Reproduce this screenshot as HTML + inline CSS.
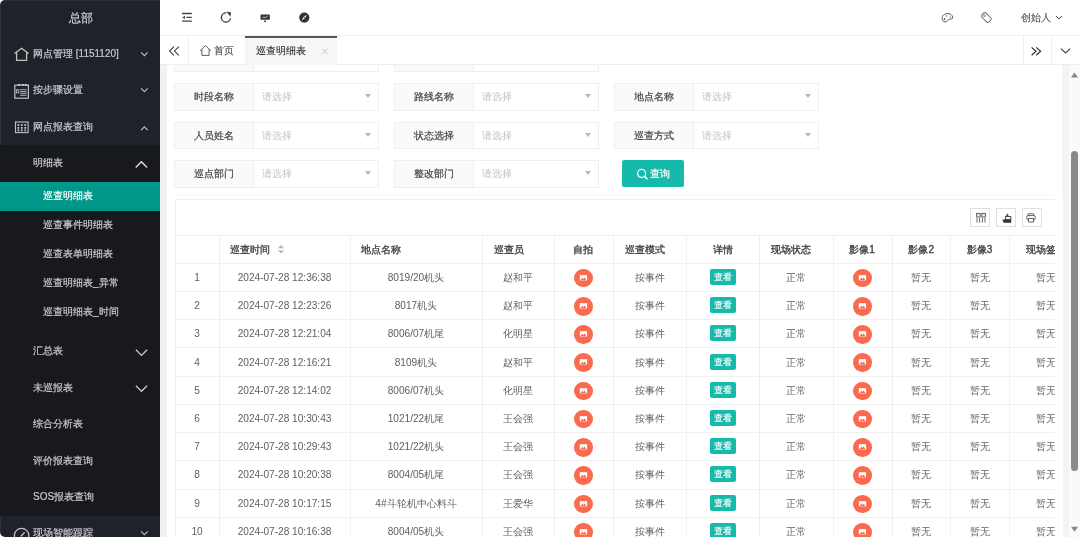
<!DOCTYPE html><html><head><meta charset="utf-8"><style>
*{margin:0;padding:0;box-sizing:border-box;}
html,body{width:1080px;height:537px;overflow:hidden;background:#fff;font-family:"Liberation Sans",sans-serif;position:relative;}
.a{position:absolute;white-space:nowrap;}
.side{position:absolute;left:0;top:0;width:160px;height:537px;background:#20222a;overflow:hidden;border-radius:5px 0 0 5px;box-shadow:inset 1px 1px 0 rgba(255,255,255,.06);}
.side .t{position:absolute;white-space:nowrap;color:#c8c9cc;-webkit-text-stroke:0.2px #c8c9cc;font-size:10px;line-height:14px;}
.sub{position:absolute;left:0;top:145px;width:160px;height:371px;background:#18191e;}
.sel{position:absolute;left:0;top:182px;width:160px;height:29px;background:#009688;}
.hdr{position:absolute;left:160px;top:0;width:920px;height:36px;background:#fff;border-bottom:1px solid #f2f2f2;}
.tabs{position:absolute;left:160px;top:36px;width:920px;height:29px;background:#fff;border-bottom:1px solid #ededed;}
.content{position:absolute;left:160px;top:65px;width:920px;height:472px;background:#f2f2f2;overflow:hidden;}
.card{position:absolute;background:#fff;}
.fi{position:absolute;height:27.5px;overflow:hidden;border:1px solid #efefef;background:#fff;}
.fi .lb{position:absolute;left:0;top:0;width:79px;height:100%;background:#fafafa;border-right:1px solid #efefef;font-size:10px;color:#444;-webkit-text-stroke:0.2px #444;text-align:center;line-height:26.5px;}
.fi .ph{position:absolute;left:87px;top:0;height:25px;line-height:26.5px;font-size:10px;color:#c2c2c2;}
.fi .car{position:absolute;right:7.5px;top:10.3px;width:0;height:0;border-left:3.6px solid transparent;border-right:3.6px solid transparent;border-top:4.3px solid #b8b8b8;}
.hl{position:absolute;height:1px;background:#f0f0f0;}
.vl{position:absolute;width:1px;background:#f0f0f0;}
.c{position:absolute;text-align:center;white-space:nowrap;font-size:10.1px;color:#5f5f5f;line-height:14px;}
.th{color:#444;-webkit-text-stroke:0.35px #444;}
.pic{position:absolute;width:18.5px;height:18.5px;border-radius:50%;background:#f96a4f;}
.side .t,.c,.fi .lb,.fi .ph,.see,.a{will-change:transform;}
.see{position:absolute;width:26px;height:16.4px;line-height:16px;background:#16baaa;color:#fff;font-size:9px;-webkit-text-stroke:0.1px #fff;border-radius:2px;text-align:center;}
</style></head><body>
<div class="side">
<div class="t" style="left:69px;top:11px;font-size:11.5px;color:rgba(255,255,255,.8)">总部</div>
<div class="sub"></div><div class="sel"></div>
<div class="t" style="left:33px;top:47.3px">网点管理 [1151120]</div>
<div class="t" style="left:33px;top:83.3px">按步骤设置</div>
<div class="t" style="left:33px;top:119.8px">网点报表查询</div>
<div class="t" style="left:33px;top:156.3px">明细表</div>
<div class="t" style="left:43px;top:189.0px;color:#fff;-webkit-text-stroke:0.2px #fff">巡查明细表</div>
<div class="t" style="left:43px;top:218.0px">巡查事件明细表</div>
<div class="t" style="left:43px;top:247.0px">巡查表单明细表</div>
<div class="t" style="left:43px;top:276.0px">巡查明细表_异常</div>
<div class="t" style="left:43px;top:305.0px">巡查明细表_时间</div>
<div class="t" style="left:33px;top:344.0px">汇总表</div>
<div class="t" style="left:33px;top:381.0px">未巡报表</div>
<div class="t" style="left:33px;top:417.0px">综合分析表</div>
<div class="t" style="left:33px;top:453.8px">评价报表查询</div>
<div class="t" style="left:33px;top:489.9px">SOS报表查询</div>
<div class="t" style="left:33px;top:526.0px">现场智能跟踪</div>
<svg class="a" style="left:0;top:0" width="160" height="537">
<path d="M141.10 52.35 L144.40 55.65 L147.70 52.35" fill="none" stroke="rgba(255,255,255,.7)" stroke-width="1.1"/>
<path d="M141.10 88.35 L144.40 91.65 L147.70 88.35" fill="none" stroke="rgba(255,255,255,.7)" stroke-width="1.1"/>
<path d="M141.10 130.05 L144.40 126.75 L147.70 130.05" fill="none" stroke="rgba(255,255,255,.7)" stroke-width="1.1"/>
<path d="M135.70 167.55 L141.40 161.85 L147.10 167.55" fill="none" stroke="rgba(255,255,255,.85)" stroke-width="1.4"/>
<path d="M135.90 349.80 L141.50 355.40 L147.10 349.80" fill="none" stroke="rgba(255,255,255,.78)" stroke-width="1.25"/>
<path d="M135.90 385.70 L141.50 391.30 L147.10 385.70" fill="none" stroke="rgba(255,255,255,.78)" stroke-width="1.25"/>
<path d="M141.10 531.35 L144.40 534.65 L147.70 531.35" fill="none" stroke="rgba(255,255,255,.7)" stroke-width="1.1"/>
<path d="M14.5 53.6 L21.6 48.2 L28.6 53.6 M16.6 52.4 V60.4 H26.6 V52.4" fill="none" stroke="rgba(255,255,255,.72)" stroke-width="1.3"/>
<rect x="14.8" y="85.2" width="13.6" height="13" fill="none" stroke="rgba(255,255,255,.72)" stroke-width="1.2"/>
<path d="M18 84.6 h2.5 M21.8 84.6 h2.5 M25 84.6 h2" stroke="rgba(255,255,255,.72)" stroke-width="1.4"/>
<path d="M20.2 89.7 h6.5 M20.2 91.6 h6.5 M20.2 93.3 h6.5 M20.2 95.3 h6.5" stroke="rgba(255,255,255,.72)" stroke-width="0.9"/>
<rect x="16.4" y="89.8" width="2.4" height="3" fill="none" stroke="rgba(255,255,255,.72)" stroke-width="0.9"/>
<rect x="15.5" y="122" width="12.6" height="10.6" fill="none" stroke="rgba(255,255,255,.72)" stroke-width="1.1"/>
<rect x="17.5" y="124.1" width="1.8" height="1.8" fill="rgba(255,255,255,.72)"/>
<rect x="17.5" y="127.0" width="1.8" height="1.8" fill="rgba(255,255,255,.72)"/>
<rect x="17.5" y="129.5" width="1.8" height="1.8" fill="rgba(255,255,255,.72)"/>
<rect x="20.900000000000002" y="124.1" width="1.8" height="1.8" fill="rgba(255,255,255,.72)"/>
<rect x="20.900000000000002" y="127.0" width="1.8" height="1.8" fill="rgba(255,255,255,.72)"/>
<rect x="20.900000000000002" y="129.5" width="1.8" height="1.8" fill="rgba(255,255,255,.72)"/>
<rect x="24.3" y="124.1" width="1.8" height="1.8" fill="rgba(255,255,255,.72)"/>
<rect x="24.3" y="127.0" width="1.8" height="1.8" fill="rgba(255,255,255,.72)"/>
<rect x="24.3" y="129.5" width="1.8" height="1.8" fill="rgba(255,255,255,.72)"/>
<circle cx="21.6" cy="535.5" r="7.2" fill="none" stroke="rgba(255,255,255,.72)" stroke-width="1.3"/>
<path d="M20.8 536.5 L24.6 532.2" stroke="rgba(255,255,255,.72)" stroke-width="1.3"/>
</svg>
<div class="a" style="left:0;top:516px;width:160px;height:21px;background:#20222a;z-index:-1"></div>
</div>
<div class="content">
</div>
<div class="a" style="left:167px;top:65px;width:895px;height:472px;background:#fff"></div>
<div class="a" style="left:1062px;top:65px;width:7px;height:472px;background:#f4f4f4"></div>
<div class="a" style="left:1069px;top:65px;width:11px;height:472px;background:#fafafa"></div>
<div class="a" style="left:1071px;top:151px;width:7px;height:320px;background:#8a8a8a;border-radius:3.5px"></div>
<svg class="a" style="left:1069px;top:65px" width="11" height="472"><path d="M2 12.6 L5.5 7.4 L9 12.6 Z" fill="#888"/><path d="M2 461.8 L5.5 466.8 L9 461.8 Z" fill="#888"/></svg>
<div class="fi" style="left:174px;top:44.5px;width:205px"><div class="lb"></div><div class="ph">请选择</div><div class="car"></div></div>
<div class="fi" style="left:394px;top:44.5px;width:205px"><div class="lb"></div><div class="ph">请选择</div><div class="car"></div></div>
<div class="fi" style="left:174px;top:83px;width:205px"><div class="lb">时段名称</div><div class="ph">请选择</div><div class="car"></div></div>
<div class="fi" style="left:394px;top:83px;width:205px"><div class="lb">路线名称</div><div class="ph">请选择</div><div class="car"></div></div>
<div class="fi" style="left:614px;top:83px;width:205px"><div class="lb">地点名称</div><div class="ph">请选择</div><div class="car"></div></div>
<div class="fi" style="left:174px;top:121.5px;width:205px"><div class="lb">人员姓名</div><div class="ph">请选择</div><div class="car"></div></div>
<div class="fi" style="left:394px;top:121.5px;width:205px"><div class="lb">状态选择</div><div class="ph">请选择</div><div class="car"></div></div>
<div class="fi" style="left:614px;top:121.5px;width:205px"><div class="lb">巡查方式</div><div class="ph">请选择</div><div class="car"></div></div>
<div class="fi" style="left:174px;top:160px;width:205px"><div class="lb">巡点部门</div><div class="ph">请选择</div><div class="car"></div></div>
<div class="fi" style="left:394px;top:160px;width:205px"><div class="lb">整改部门</div><div class="ph">请选择</div><div class="car"></div></div>
<div class="a" style="left:176px;top:60px;width:420px;height:4px"></div>
<div class="a" style="left:622px;top:160px;width:62px;height:27.2px;background:#16baaa;border-radius:2px"></div>
<svg class="a" style="left:636px;top:168px" width="14" height="14"><circle cx="5.6" cy="5.4" r="4" fill="none" stroke="#fff" stroke-width="1.2"/><path d="M8.6 8.4 L11.4 11.2" stroke="#fff" stroke-width="1.6"/></svg>
<div class="a" style="left:650px;top:166.6px;font-size:10px;color:#fff;-webkit-text-stroke:0.2px #fff;line-height:14px">查询</div>
<div class="hl" style="left:174px;top:194px;width:880px;background:#f9f9f9"></div>
<div class="a" style="left:174.5px;top:198.5px;width:880px;height:340px;border:1px solid #eee;border-right:none"></div>
<div class="a" style="left:970.2px;top:208.2px;width:19.6px;height:18.6px;border:1px solid #e0e0e0"></div>
<div class="a" style="left:996.1px;top:208.2px;width:19.6px;height:18.6px;border:1px solid #e0e0e0"></div>
<div class="a" style="left:1022.1px;top:208.2px;width:19.6px;height:18.6px;border:1px solid #e0e0e0"></div>
<svg class="a" style="left:960px;top:200px" width="90" height="36" viewBox="960 200 90 36">
<rect x="976.6" y="213.4" width="3.6" height="3.6" fill="#eee" stroke="#555" stroke-width="0.9"/><rect x="981.8" y="213.4" width="3.6" height="3.6" fill="#eee" stroke="#555" stroke-width="0.9"/>
<path d="M977 218 v4.6 M979.6 218 v4.6 M982.4 218 v4.6 M985 218 v4.6" stroke="#555" stroke-width="0.9"/>
<path d="M1002.3 219.4 h8.9 v3.3 h-7.6 Z" fill="#333"/><rect x="1005.4" y="216.6" width="5.4" height="3" fill="#fff" stroke="#333" stroke-width="0.9"/><path d="M1005.6 216.2 L1007.6 213.4 L1008.6 215.6 Z" fill="#333"/>
<path d="M1028.2 215.6 v-1.8 h5.6 v1.8" fill="none" stroke="#555" stroke-width="0.9"/><rect x="1026.8" y="215.6" width="8.4" height="4.2" rx="1.2" fill="none" stroke="#555" stroke-width="0.9"/><rect x="1028.6" y="218.4" width="4.8" height="3.6" fill="#fff" stroke="#555" stroke-width="0.9"/>
</svg>
<div class="a" style="left:0;top:0;width:1054.5px;height:537px;overflow:hidden">
<div class="hl" style="left:174.5px;top:234.6px;width:880.0px"></div>
<div class="hl" style="left:174.5px;top:262.82px;width:880.0px"></div>
<div class="hl" style="left:174.5px;top:291.04px;width:880.0px"></div>
<div class="hl" style="left:174.5px;top:319.26px;width:880.0px"></div>
<div class="hl" style="left:174.5px;top:347.48px;width:880.0px"></div>
<div class="hl" style="left:174.5px;top:375.70px;width:880.0px"></div>
<div class="hl" style="left:174.5px;top:403.92px;width:880.0px"></div>
<div class="hl" style="left:174.5px;top:432.14px;width:880.0px"></div>
<div class="hl" style="left:174.5px;top:460.36px;width:880.0px"></div>
<div class="hl" style="left:174.5px;top:488.58px;width:880.0px"></div>
<div class="hl" style="left:174.5px;top:516.80px;width:880.0px"></div>
<div class="hl" style="left:174.5px;top:545.02px;width:880.0px"></div>
<div class="vl" style="left:218.5px;top:234.6px;height:302.4px"></div>
<div class="vl" style="left:349.6px;top:234.6px;height:302.4px"></div>
<div class="vl" style="left:481.5px;top:234.6px;height:302.4px"></div>
<div class="vl" style="left:554.1px;top:234.6px;height:302.4px"></div>
<div class="vl" style="left:612.7px;top:234.6px;height:302.4px"></div>
<div class="vl" style="left:686.1px;top:234.6px;height:302.4px"></div>
<div class="vl" style="left:759.3px;top:234.6px;height:302.4px"></div>
<div class="vl" style="left:833.2px;top:234.6px;height:302.4px"></div>
<div class="vl" style="left:891.5px;top:234.6px;height:302.4px"></div>
<div class="vl" style="left:950.0px;top:234.6px;height:302.4px"></div>
<div class="vl" style="left:1009.2px;top:234.6px;height:302.4px"></div>
<div class="c th" style="left:230.0px;top:242.51px">巡查时间</div>
<svg class="a" style="left:276.5px;top:243.71px" width="8" height="11"><path d="M0.8 4.2 L4 1 L7.2 4.2 Z M0.8 6.4 L4 9.6 L7.2 6.4 Z" fill="#b8b8b8"/></svg>
<div class="c th" style="left:361.1px;top:242.51px">地点名称</div>
<div class="c th" style="left:493.5px;top:242.51px">巡查员</div>
<div class="c th" style="left:554.1px;width:58.60000000000002px;top:242.51px">自拍</div>
<div class="c th" style="left:624.7px;top:242.51px">巡查模式</div>
<div class="c th" style="left:686.1px;width:73.19999999999993px;top:242.51px">详情</div>
<div class="c th" style="left:771.3px;top:242.51px">现场状态</div>
<div class="c th" style="left:833.2px;width:58.299999999999955px;top:242.51px">影像1</div>
<div class="c th" style="left:891.5px;width:58.5px;top:242.51px">影像2</div>
<div class="c th" style="left:950.0px;width:59.200000000000045px;top:242.51px">影像3</div>
<div class="c th" style="left:1009.2px;width:73.29999999999995px;top:242.51px">现场签到</div>
<div class="c" style="left:174.5px;width:44.0px;top:270.93px">1</div>
<div class="c" style="left:218.5px;width:131.10000000000002px;top:270.93px">2024-07-28 12:36:38</div>
<div class="c" style="left:349.6px;width:131.89999999999998px;top:270.93px">8019/20机头</div>
<div class="c" style="left:481.5px;width:72.60000000000002px;top:270.93px">赵和平</div>
<div class="pic" style="left:574.15px;top:268.78px"><svg width="18.5" height="18.5" viewBox="0 0 18.5 18.5" style="position:absolute;left:0;top:0"><rect x="5.8" y="6.2" width="7.3" height="5.2" fill="#fff"/><path d="M6.6 10.9 L8.2 8.7 L9.4 10.1 L10.6 8.5 L12.3 10.9 Z" fill="#f96a4f"/></svg></div>
<div class="c" style="left:612.7px;width:73.39999999999998px;top:270.93px">按事件</div>
<div class="see" style="left:709.70px;top:268.93px">查看</div>
<div class="c" style="left:759.3px;width:73.90000000000009px;top:270.93px">正常</div>
<div class="pic" style="left:853.10px;top:268.78px"><svg width="18.5" height="18.5" viewBox="0 0 18.5 18.5" style="position:absolute;left:0;top:0"><rect x="5.8" y="6.2" width="7.3" height="5.2" fill="#fff"/><path d="M6.6 10.9 L8.2 8.7 L9.4 10.1 L10.6 8.5 L12.3 10.9 Z" fill="#f96a4f"/></svg></div>
<div class="c" style="left:891.5px;width:58.5px;top:270.93px">暂无</div>
<div class="c" style="left:950.0px;width:59.200000000000045px;top:270.93px">暂无</div>
<div class="c" style="left:1009.2px;width:73.29999999999995px;top:270.93px">暂无</div>
<div class="c" style="left:174.5px;width:44.0px;top:299.15px">2</div>
<div class="c" style="left:218.5px;width:131.10000000000002px;top:299.15px">2024-07-28 12:23:26</div>
<div class="c" style="left:349.6px;width:131.89999999999998px;top:299.15px">8017机头</div>
<div class="c" style="left:481.5px;width:72.60000000000002px;top:299.15px">赵和平</div>
<div class="pic" style="left:574.15px;top:297.00px"><svg width="18.5" height="18.5" viewBox="0 0 18.5 18.5" style="position:absolute;left:0;top:0"><rect x="5.8" y="6.2" width="7.3" height="5.2" fill="#fff"/><path d="M6.6 10.9 L8.2 8.7 L9.4 10.1 L10.6 8.5 L12.3 10.9 Z" fill="#f96a4f"/></svg></div>
<div class="c" style="left:612.7px;width:73.39999999999998px;top:299.15px">按事件</div>
<div class="see" style="left:709.70px;top:297.15px">查看</div>
<div class="c" style="left:759.3px;width:73.90000000000009px;top:299.15px">正常</div>
<div class="pic" style="left:853.10px;top:297.00px"><svg width="18.5" height="18.5" viewBox="0 0 18.5 18.5" style="position:absolute;left:0;top:0"><rect x="5.8" y="6.2" width="7.3" height="5.2" fill="#fff"/><path d="M6.6 10.9 L8.2 8.7 L9.4 10.1 L10.6 8.5 L12.3 10.9 Z" fill="#f96a4f"/></svg></div>
<div class="c" style="left:891.5px;width:58.5px;top:299.15px">暂无</div>
<div class="c" style="left:950.0px;width:59.200000000000045px;top:299.15px">暂无</div>
<div class="c" style="left:1009.2px;width:73.29999999999995px;top:299.15px">暂无</div>
<div class="c" style="left:174.5px;width:44.0px;top:327.37px">3</div>
<div class="c" style="left:218.5px;width:131.10000000000002px;top:327.37px">2024-07-28 12:21:04</div>
<div class="c" style="left:349.6px;width:131.89999999999998px;top:327.37px">8006/07机尾</div>
<div class="c" style="left:481.5px;width:72.60000000000002px;top:327.37px">化明星</div>
<div class="pic" style="left:574.15px;top:325.22px"><svg width="18.5" height="18.5" viewBox="0 0 18.5 18.5" style="position:absolute;left:0;top:0"><rect x="5.8" y="6.2" width="7.3" height="5.2" fill="#fff"/><path d="M6.6 10.9 L8.2 8.7 L9.4 10.1 L10.6 8.5 L12.3 10.9 Z" fill="#f96a4f"/></svg></div>
<div class="c" style="left:612.7px;width:73.39999999999998px;top:327.37px">按事件</div>
<div class="see" style="left:709.70px;top:325.37px">查看</div>
<div class="c" style="left:759.3px;width:73.90000000000009px;top:327.37px">正常</div>
<div class="pic" style="left:853.10px;top:325.22px"><svg width="18.5" height="18.5" viewBox="0 0 18.5 18.5" style="position:absolute;left:0;top:0"><rect x="5.8" y="6.2" width="7.3" height="5.2" fill="#fff"/><path d="M6.6 10.9 L8.2 8.7 L9.4 10.1 L10.6 8.5 L12.3 10.9 Z" fill="#f96a4f"/></svg></div>
<div class="c" style="left:891.5px;width:58.5px;top:327.37px">暂无</div>
<div class="c" style="left:950.0px;width:59.200000000000045px;top:327.37px">暂无</div>
<div class="c" style="left:1009.2px;width:73.29999999999995px;top:327.37px">暂无</div>
<div class="c" style="left:174.5px;width:44.0px;top:355.59px">4</div>
<div class="c" style="left:218.5px;width:131.10000000000002px;top:355.59px">2024-07-28 12:16:21</div>
<div class="c" style="left:349.6px;width:131.89999999999998px;top:355.59px">8109机头</div>
<div class="c" style="left:481.5px;width:72.60000000000002px;top:355.59px">赵和平</div>
<div class="pic" style="left:574.15px;top:353.44px"><svg width="18.5" height="18.5" viewBox="0 0 18.5 18.5" style="position:absolute;left:0;top:0"><rect x="5.8" y="6.2" width="7.3" height="5.2" fill="#fff"/><path d="M6.6 10.9 L8.2 8.7 L9.4 10.1 L10.6 8.5 L12.3 10.9 Z" fill="#f96a4f"/></svg></div>
<div class="c" style="left:612.7px;width:73.39999999999998px;top:355.59px">按事件</div>
<div class="see" style="left:709.70px;top:353.59px">查看</div>
<div class="c" style="left:759.3px;width:73.90000000000009px;top:355.59px">正常</div>
<div class="pic" style="left:853.10px;top:353.44px"><svg width="18.5" height="18.5" viewBox="0 0 18.5 18.5" style="position:absolute;left:0;top:0"><rect x="5.8" y="6.2" width="7.3" height="5.2" fill="#fff"/><path d="M6.6 10.9 L8.2 8.7 L9.4 10.1 L10.6 8.5 L12.3 10.9 Z" fill="#f96a4f"/></svg></div>
<div class="c" style="left:891.5px;width:58.5px;top:355.59px">暂无</div>
<div class="c" style="left:950.0px;width:59.200000000000045px;top:355.59px">暂无</div>
<div class="c" style="left:1009.2px;width:73.29999999999995px;top:355.59px">暂无</div>
<div class="c" style="left:174.5px;width:44.0px;top:383.81px">5</div>
<div class="c" style="left:218.5px;width:131.10000000000002px;top:383.81px">2024-07-28 12:14:02</div>
<div class="c" style="left:349.6px;width:131.89999999999998px;top:383.81px">8006/07机头</div>
<div class="c" style="left:481.5px;width:72.60000000000002px;top:383.81px">化明星</div>
<div class="pic" style="left:574.15px;top:381.66px"><svg width="18.5" height="18.5" viewBox="0 0 18.5 18.5" style="position:absolute;left:0;top:0"><rect x="5.8" y="6.2" width="7.3" height="5.2" fill="#fff"/><path d="M6.6 10.9 L8.2 8.7 L9.4 10.1 L10.6 8.5 L12.3 10.9 Z" fill="#f96a4f"/></svg></div>
<div class="c" style="left:612.7px;width:73.39999999999998px;top:383.81px">按事件</div>
<div class="see" style="left:709.70px;top:381.81px">查看</div>
<div class="c" style="left:759.3px;width:73.90000000000009px;top:383.81px">正常</div>
<div class="pic" style="left:853.10px;top:381.66px"><svg width="18.5" height="18.5" viewBox="0 0 18.5 18.5" style="position:absolute;left:0;top:0"><rect x="5.8" y="6.2" width="7.3" height="5.2" fill="#fff"/><path d="M6.6 10.9 L8.2 8.7 L9.4 10.1 L10.6 8.5 L12.3 10.9 Z" fill="#f96a4f"/></svg></div>
<div class="c" style="left:891.5px;width:58.5px;top:383.81px">暂无</div>
<div class="c" style="left:950.0px;width:59.200000000000045px;top:383.81px">暂无</div>
<div class="c" style="left:1009.2px;width:73.29999999999995px;top:383.81px">暂无</div>
<div class="c" style="left:174.5px;width:44.0px;top:412.03px">6</div>
<div class="c" style="left:218.5px;width:131.10000000000002px;top:412.03px">2024-07-28 10:30:43</div>
<div class="c" style="left:349.6px;width:131.89999999999998px;top:412.03px">1021/22机尾</div>
<div class="c" style="left:481.5px;width:72.60000000000002px;top:412.03px">王会强</div>
<div class="pic" style="left:574.15px;top:409.88px"><svg width="18.5" height="18.5" viewBox="0 0 18.5 18.5" style="position:absolute;left:0;top:0"><rect x="5.8" y="6.2" width="7.3" height="5.2" fill="#fff"/><path d="M6.6 10.9 L8.2 8.7 L9.4 10.1 L10.6 8.5 L12.3 10.9 Z" fill="#f96a4f"/></svg></div>
<div class="c" style="left:612.7px;width:73.39999999999998px;top:412.03px">按事件</div>
<div class="see" style="left:709.70px;top:410.03px">查看</div>
<div class="c" style="left:759.3px;width:73.90000000000009px;top:412.03px">正常</div>
<div class="pic" style="left:853.10px;top:409.88px"><svg width="18.5" height="18.5" viewBox="0 0 18.5 18.5" style="position:absolute;left:0;top:0"><rect x="5.8" y="6.2" width="7.3" height="5.2" fill="#fff"/><path d="M6.6 10.9 L8.2 8.7 L9.4 10.1 L10.6 8.5 L12.3 10.9 Z" fill="#f96a4f"/></svg></div>
<div class="c" style="left:891.5px;width:58.5px;top:412.03px">暂无</div>
<div class="c" style="left:950.0px;width:59.200000000000045px;top:412.03px">暂无</div>
<div class="c" style="left:1009.2px;width:73.29999999999995px;top:412.03px">暂无</div>
<div class="c" style="left:174.5px;width:44.0px;top:440.25px">7</div>
<div class="c" style="left:218.5px;width:131.10000000000002px;top:440.25px">2024-07-28 10:29:43</div>
<div class="c" style="left:349.6px;width:131.89999999999998px;top:440.25px">1021/22机头</div>
<div class="c" style="left:481.5px;width:72.60000000000002px;top:440.25px">王会强</div>
<div class="pic" style="left:574.15px;top:438.10px"><svg width="18.5" height="18.5" viewBox="0 0 18.5 18.5" style="position:absolute;left:0;top:0"><rect x="5.8" y="6.2" width="7.3" height="5.2" fill="#fff"/><path d="M6.6 10.9 L8.2 8.7 L9.4 10.1 L10.6 8.5 L12.3 10.9 Z" fill="#f96a4f"/></svg></div>
<div class="c" style="left:612.7px;width:73.39999999999998px;top:440.25px">按事件</div>
<div class="see" style="left:709.70px;top:438.25px">查看</div>
<div class="c" style="left:759.3px;width:73.90000000000009px;top:440.25px">正常</div>
<div class="pic" style="left:853.10px;top:438.10px"><svg width="18.5" height="18.5" viewBox="0 0 18.5 18.5" style="position:absolute;left:0;top:0"><rect x="5.8" y="6.2" width="7.3" height="5.2" fill="#fff"/><path d="M6.6 10.9 L8.2 8.7 L9.4 10.1 L10.6 8.5 L12.3 10.9 Z" fill="#f96a4f"/></svg></div>
<div class="c" style="left:891.5px;width:58.5px;top:440.25px">暂无</div>
<div class="c" style="left:950.0px;width:59.200000000000045px;top:440.25px">暂无</div>
<div class="c" style="left:1009.2px;width:73.29999999999995px;top:440.25px">暂无</div>
<div class="c" style="left:174.5px;width:44.0px;top:468.47px">8</div>
<div class="c" style="left:218.5px;width:131.10000000000002px;top:468.47px">2024-07-28 10:20:38</div>
<div class="c" style="left:349.6px;width:131.89999999999998px;top:468.47px">8004/05机尾</div>
<div class="c" style="left:481.5px;width:72.60000000000002px;top:468.47px">王会强</div>
<div class="pic" style="left:574.15px;top:466.32px"><svg width="18.5" height="18.5" viewBox="0 0 18.5 18.5" style="position:absolute;left:0;top:0"><rect x="5.8" y="6.2" width="7.3" height="5.2" fill="#fff"/><path d="M6.6 10.9 L8.2 8.7 L9.4 10.1 L10.6 8.5 L12.3 10.9 Z" fill="#f96a4f"/></svg></div>
<div class="c" style="left:612.7px;width:73.39999999999998px;top:468.47px">按事件</div>
<div class="see" style="left:709.70px;top:466.47px">查看</div>
<div class="c" style="left:759.3px;width:73.90000000000009px;top:468.47px">正常</div>
<div class="pic" style="left:853.10px;top:466.32px"><svg width="18.5" height="18.5" viewBox="0 0 18.5 18.5" style="position:absolute;left:0;top:0"><rect x="5.8" y="6.2" width="7.3" height="5.2" fill="#fff"/><path d="M6.6 10.9 L8.2 8.7 L9.4 10.1 L10.6 8.5 L12.3 10.9 Z" fill="#f96a4f"/></svg></div>
<div class="c" style="left:891.5px;width:58.5px;top:468.47px">暂无</div>
<div class="c" style="left:950.0px;width:59.200000000000045px;top:468.47px">暂无</div>
<div class="c" style="left:1009.2px;width:73.29999999999995px;top:468.47px">暂无</div>
<div class="c" style="left:174.5px;width:44.0px;top:496.69px">9</div>
<div class="c" style="left:218.5px;width:131.10000000000002px;top:496.69px">2024-07-28 10:17:15</div>
<div class="c" style="left:349.6px;width:131.89999999999998px;top:496.69px">4#斗轮机中心料斗</div>
<div class="c" style="left:481.5px;width:72.60000000000002px;top:496.69px">王爱华</div>
<div class="pic" style="left:574.15px;top:494.54px"><svg width="18.5" height="18.5" viewBox="0 0 18.5 18.5" style="position:absolute;left:0;top:0"><rect x="5.8" y="6.2" width="7.3" height="5.2" fill="#fff"/><path d="M6.6 10.9 L8.2 8.7 L9.4 10.1 L10.6 8.5 L12.3 10.9 Z" fill="#f96a4f"/></svg></div>
<div class="c" style="left:612.7px;width:73.39999999999998px;top:496.69px">按事件</div>
<div class="see" style="left:709.70px;top:494.69px">查看</div>
<div class="c" style="left:759.3px;width:73.90000000000009px;top:496.69px">正常</div>
<div class="pic" style="left:853.10px;top:494.54px"><svg width="18.5" height="18.5" viewBox="0 0 18.5 18.5" style="position:absolute;left:0;top:0"><rect x="5.8" y="6.2" width="7.3" height="5.2" fill="#fff"/><path d="M6.6 10.9 L8.2 8.7 L9.4 10.1 L10.6 8.5 L12.3 10.9 Z" fill="#f96a4f"/></svg></div>
<div class="c" style="left:891.5px;width:58.5px;top:496.69px">暂无</div>
<div class="c" style="left:950.0px;width:59.200000000000045px;top:496.69px">暂无</div>
<div class="c" style="left:1009.2px;width:73.29999999999995px;top:496.69px">暂无</div>
<div class="c" style="left:174.5px;width:44.0px;top:524.91px">10</div>
<div class="c" style="left:218.5px;width:131.10000000000002px;top:524.91px">2024-07-28 10:16:38</div>
<div class="c" style="left:349.6px;width:131.89999999999998px;top:524.91px">8004/05机头</div>
<div class="c" style="left:481.5px;width:72.60000000000002px;top:524.91px">王会强</div>
<div class="pic" style="left:574.15px;top:522.76px"><svg width="18.5" height="18.5" viewBox="0 0 18.5 18.5" style="position:absolute;left:0;top:0"><rect x="5.8" y="6.2" width="7.3" height="5.2" fill="#fff"/><path d="M6.6 10.9 L8.2 8.7 L9.4 10.1 L10.6 8.5 L12.3 10.9 Z" fill="#f96a4f"/></svg></div>
<div class="c" style="left:612.7px;width:73.39999999999998px;top:524.91px">按事件</div>
<div class="see" style="left:709.70px;top:522.91px">查看</div>
<div class="c" style="left:759.3px;width:73.90000000000009px;top:524.91px">正常</div>
<div class="pic" style="left:853.10px;top:522.76px"><svg width="18.5" height="18.5" viewBox="0 0 18.5 18.5" style="position:absolute;left:0;top:0"><rect x="5.8" y="6.2" width="7.3" height="5.2" fill="#fff"/><path d="M6.6 10.9 L8.2 8.7 L9.4 10.1 L10.6 8.5 L12.3 10.9 Z" fill="#f96a4f"/></svg></div>
<div class="c" style="left:891.5px;width:58.5px;top:524.91px">暂无</div>
<div class="c" style="left:950.0px;width:59.200000000000045px;top:524.91px">暂无</div>
<div class="c" style="left:1009.2px;width:73.29999999999995px;top:524.91px">暂无</div>
</div>
<div class="a" style="left:1054.5px;top:199px;width:7.5px;height:338px;background:#fff"></div>
<div class="hdr"></div>
<svg class="a" style="left:160px;top:0" width="920" height="36" viewBox="160 0 920 36">
<path d="M182 13.5 h9.8 M186.4 17.4 h5.4 M182 21.2 h9.8" stroke="#444" stroke-width="1.3"/>
<path d="M182.2 17.4 L185 15.8 V19 Z" fill="#444"/>
<path d="M230.5 18.4 A4.6 4.6 0 1 1 226.4 12.9" fill="none" stroke="#333" stroke-width="1.3"/>
<path d="M226.6 11.6 L231 12.6 L230.4 16.8 Z" fill="#333"/>
<rect x="260.5" y="14.5" width="9.3" height="5.3" fill="#333" rx="0.5"/>
<path d="M262.4 18.2 L264 16.9 L265.3 17.8 L267.8 15.9" stroke="#fff" stroke-width="0.7" fill="none"/>
<path d="M265.1 19.8 v1.8 M264 21.6 h2.2" stroke="#333" stroke-width="0.8"/>
<circle cx="304.3" cy="17.6" r="5.1" fill="#333"/>
<path d="M306.9 14.6 L303.6 17 L301.6 20.6 L305 18.2 Z" fill="#fff"/><circle cx="304.3" cy="17.6" r="0.6" fill="#333"/>
<path d="M944 21.6 C941.6 20.6 941.6 16.6 943.6 15 C945.8 13 950 13 952 15.6 C953.2 17.2 952.6 19.4 950.6 19.2 C949.2 19 948.2 19.8 947.6 20.8 C947 21.8 945.6 22.2 944 21.6 Z" fill="none" stroke="#555" stroke-width="1"/>
<circle cx="944.6" cy="19.2" r="0.9" fill="#555"/><circle cx="946.6" cy="15.9" r="0.6" fill="#555"/><circle cx="950.3" cy="17.1" r="0.6" fill="#555"/>
<rect x="981.3" y="14.6" width="10" height="5.8" rx="1.4" transform="rotate(45 986.3 17.5)" fill="none" stroke="#666" stroke-width="0.95"/>
<circle cx="984.4" cy="15.6" r="1" fill="none" stroke="#666" stroke-width="0.9"/>
<path d="M1056 16 L1059 19 L1062 16" fill="none" stroke="#555" stroke-width="1"/>
</svg>
<div class="a" style="left:1021px;top:10.5px;font-size:10px;color:#555;-webkit-text-stroke:0.15px #555;line-height:14px">创始人</div>
<div class="tabs"></div>
<div class="a" style="left:188px;top:36px;width:1px;height:29px;background:#f0f0f0"></div>
<div class="a" style="left:245.3px;top:36px;width:91.5px;height:29px;background:#f6f6f6;border-top:2px solid #555"></div>
<div class="a" style="left:1022.5px;top:36px;width:1px;height:29px;background:#f0f0f0"></div>
<div class="a" style="left:1051px;top:36px;width:1px;height:29px;background:#f0f0f0"></div>
<div class="a" style="left:214px;top:44px;font-size:10px;color:#555;-webkit-text-stroke:0.15px #555;line-height:14px">首页</div>
<div class="a" style="left:256.4px;top:44px;font-size:10px;color:#333;-webkit-text-stroke:0.15px #333;line-height:14px">巡查明细表</div>
<svg class="a" style="left:160px;top:36px" width="920" height="29" viewBox="160 36 920 29">
<path d="M174 46.6 L169.6 51 L174 55.4 M178.8 46.6 L174.4 51 L178.8 55.4" fill="none" stroke="#333" stroke-width="1.05"/>
<path d="M200.2 50.9 L205.5 45.6 L210.8 50.9 M201.9 49.3 V55.4 H209.1 V49.3" fill="none" stroke="#555" stroke-width="0.95"/>
<path d="M322.4 48.8 L327.6 54 M327.6 48.8 L322.4 54" stroke="#bbb" stroke-width="0.9"/>
<path d="M1031.6 47.4 L1036 51.3 L1031.6 55.2 M1036.2 47.4 L1040.6 51.3 L1036.2 55.2" fill="none" stroke="#333" stroke-width="1.2"/>
<path d="M1061 48.6 L1065.6 53 L1070.2 48.6" fill="none" stroke="#444" stroke-width="1.1"/>
</svg>
</body></html>
